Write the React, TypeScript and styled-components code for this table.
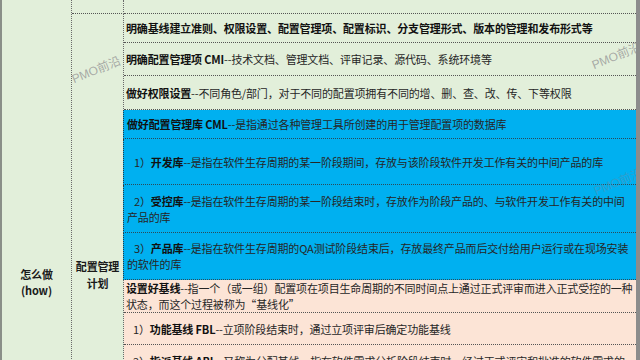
import styled, { createGlobalStyle } from "styled-components";

const GlobalStyle = createGlobalStyle`
  html, body {
    margin: 0;
    padding: 0;
    background: #e2efda;
  }
  body {
    font-family: "Noto Sans CJK SC", "Noto Sans", sans-serif;
  }
`;

const Sheet = styled.div`
  position: relative;
  width: 640px;
  height: 360px;
  overflow: hidden;
  box-sizing: border-box;
  border-left: 2px solid #8a8f88;
  border-right: 4px solid #8c8c8c;
  background: #e2efda;
  display: grid;
  grid-template-columns: 70px 52px 1fr;
  grid-template-rows: repeat(11, auto);
  align-content: start;
  color: #262626;
  font-size: 11px;
  letter-spacing: -0.15px;
`;

const HowCell = styled.div`
  grid-column: 1;
  grid-row: 1 / span 11;
  border-right: 1px dotted #6a6a6a;
  display: flex;
  flex-direction: column;
  align-items: center;
  padding-top: 266px;
  font-weight: 700;
  line-height: 16px;
  color: #1a1a1a;
`;

const TopStub = styled.div`
  grid-column: 2;
  grid-row: 1;
  border-right: 1px dotted #6a6a6a;
  border-bottom: 1px dotted #555;
`;

const PlanCell = styled.div`
  grid-column: 2;
  grid-row: 2 / span 10;
  border-right: 1px dotted #6a6a6a;
  display: flex;
  flex-direction: column;
  align-items: center;
  padding-top: 244px;
  font-weight: 700;
  line-height: 17px;
  color: #1a1a1a;
`;

const tones = {
  green: "#e2efda",
  blue: "#00b0f0",
  peach: "#fce4d6",
};

const Row = styled.div<{ $h: number; $tone: keyof typeof tones }>`
  grid-column: 3;
  box-sizing: border-box;
  height: ${(p) => p.$h}px;
  background: ${(p) => tones[p.$tone]};
  border-bottom: 1px dotted ${(p) => (p.$tone === "blue" ? "#2a4a5a" : "#555")};
  border-left: ${(p) => (p.$tone === "blue" ? "1px dotted #2a3a44" : "0")};
  margin-left: ${(p) => (p.$tone === "blue" ? "-1px" : "0")};
  padding: 0 2px 0 ${(p) => (p.$tone === "blue" ? "3px" : "2px")};
  display: flex;
  align-items: center;
  line-height: 16px;
`;

const Text = styled.div``;

const Num = styled.span`
  margin-left: 7px;
`;

const B = styled.b`
  font-weight: 700;
  color: #111;
`;

const Mark = styled.span<{ $x: number; $y: number; $faint?: boolean }>`
  position: absolute;
  left: ${(p) => p.$x}px;
  top: ${(p) => p.$y}px;
  transform: rotate(-22deg);
  font-family: "Liberation Sans", "Noto Sans CJK SC", sans-serif;
  font-size: 12px;
  letter-spacing: 0;
  color: ${(p) => (p.$faint ? "rgba(90, 140, 170, 0.55)" : "rgba(150, 150, 150, 0.8)")};
  pointer-events: none;
  white-space: nowrap;
`;

export default function App() {
  return (
    <>
      <GlobalStyle />
      <Sheet>
        <HowCell>
          <span>怎么做</span>
          <span>(how)</span>
        </HowCell>
        <TopStub />
        <PlanCell>
          <span>配置管理</span>
          <span>计划</span>
        </PlanCell>

        <Row $h={14} $tone="green" />
        <Row $h={29} $tone="green">
          <Text>
            <B>明确基线建立准则、权限设置、配置管理项、配置标识、分支管理形式、版本的管理和发布形式等</B>
          </Text>
        </Row>
        <Row $h={33} $tone="green">
          <Text>
            <B>明确配置管理项 CMI</B>--技术文档、管理文档、评审记录、源代码、系统环境等
          </Text>
        </Row>
        <Row $h={34} $tone="green">
          <Text>
            <B>做好权限设置</B>--不同角色/部门，对于不同的配置项拥有不同的增、删、查、改、传、下等权限
          </Text>
        </Row>
        <Row $h={29} $tone="blue">
          <Text>
            <B>做好配置管理库 CML</B>--是指通过各种管理工具所创建的用于管理配置项的数据库
          </Text>
        </Row>
        <Row $h={46} $tone="blue">
          <Text>
            <Num>1）</Num><B>开发库</B>--是指在软件生存周期的某一阶段期间，存放与该阶段软件开发工作有关的中间产品的库
          </Text>
        </Row>
        <Row $h={48} $tone="blue">
          <Text>
            <Num>2）</Num><B>受控库</B>--是指在软件生存周期的某一阶段结束时，存放作为阶段产品的、与软件开发工作有关的中间产品的库
          </Text>
        </Row>
        <Row $h={47} $tone="blue">
          <Text>
            <Num>3）</Num><B>产品库</B>--是指在软件生存周期的QA测试阶段结束后，存放最终产品而后交付给用户运行或在现场安装的软件的库
          </Text>
        </Row>
        <Row $h={33} $tone="peach">
          <Text>
            <B>设置好基线</B>--指一个（或一组）配置项在项目生命周期的不同时间点上通过正式评审而进入正式受控的一种状态，而这个过程被称为“基线化”
          </Text>
        </Row>
        <Row $h={32} $tone="peach">
          <Text>
            <Num>1）</Num><B>功能基线 FBL</B>--立项阶段结束时，通过立项评审后确定功能基线
          </Text>
        </Row>
        <Row $h={32} $tone="peach">
          <Text>
            <Num>2）</Num><B>指派基线 ABL</B>--又称为分配基线，指在软件需求分析阶段结束时，经过正式评审和批准的软件需求的
          </Text>
        </Row>

        <Mark $x={68} $y={60}>PMO前沿</Mark>
        <Mark $x={588} $y={46}>PMO前沿</Mark>
        <Mark $x={590} $y={172} $faint>PMO前沿</Mark>
      </Sheet>
    </>
  );
}
